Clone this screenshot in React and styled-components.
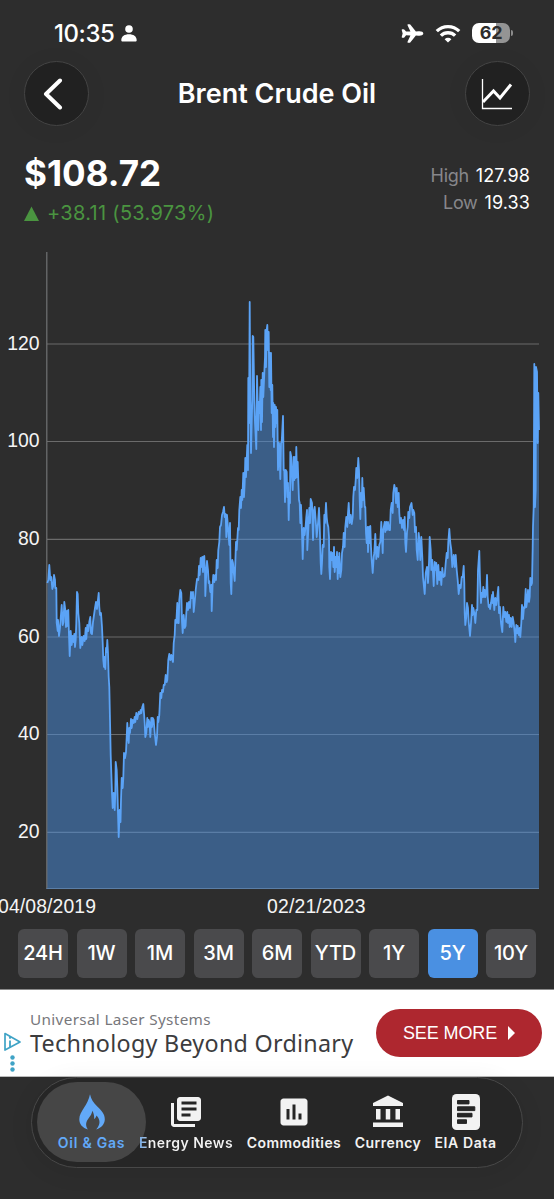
import React from "react";
import styled, { createGlobalStyle } from "styled-components";
import { IoAirplane } from "react-icons/io5";
import { MdLibraryBooks, MdAssessment, MdAccountBalance } from "react-icons/md";

const GlobalStyle = createGlobalStyle`
  * { box-sizing: border-box; }
  body { margin: 0; background: #2d2d2d; }
`;

const Screen = styled.div`
  width: 554px;
  height: 1199px;
  overflow: hidden;
  display: flex;
  flex-direction: column;
  background: #2d2d2d;
  color: #fff;
  font-family: Inter, "Liberation Sans", sans-serif;
  white-space: nowrap;
`;

const StatusBar = styled.div`
  height: 61px;
  padding: 5px 40px 0 54px;
  display: flex;
  align-items: center;
  justify-content: space-between;
`;

const StatusGroup = styled.div`
  display: flex;
  align-items: center;
  gap: ${(p) => p.$gap}px;
`;

const Clock = styled.span`
  font-size: 24px;
  font-weight: 500;
  letter-spacing: -0.45px;
`;

const Battery = styled.div`
  position: relative;
  width: 38px;
  height: 20px;
  border-radius: 7px;
  background: linear-gradient(90deg, #fff 62%, #949494 62%);
  color: #2d2d2d;
  font-size: 18px;
  line-height: 20px;
  font-weight: 700;
  text-align: center;
  letter-spacing: -0.3px;
  margin-right: 4px;
  &::after {
    content: "";
    position: absolute;
    left: 39px;
    top: 7px;
    width: 2px;
    height: 6px;
    border-radius: 0 2px 2px 0;
    background: #8b8b8b;
  }
`;

const Header = styled.header`
  height: 65px;
  padding: 0 24px;
  display: flex;
  align-items: center;
  justify-content: space-between;
`;

const RoundButton = styled.button`
  width: 65px;
  height: 65px;
  padding: 0;
  border: 1px solid #444;
  border-radius: 50%;
  background: #212121;
  box-shadow: 0 2px 24px rgba(0, 0, 0, 0.05);
  display: flex;
  align-items: center;
  justify-content: center;
`;

const Title = styled.h1`
  margin: 0;
  font-size: 27px;
  font-weight: 600;
  letter-spacing: 0;
`;

const Summary = styled.section`
  height: 114px;
  padding: 27px 24px 0;
  display: flex;
  justify-content: space-between;
`;

const Price = styled.div`
  font-size: 35px;
  line-height: 40px;
  font-weight: 700;
  letter-spacing: 0.05px;
`;

const Change = styled.div`
  margin-top: 8px;
  display: flex;
  align-items: center;
  gap: 8px;
  color: #4a9440;
  font-size: 20px;
  line-height: 24px;
  letter-spacing: 0.3px;
`;

const Range = styled.div`
  padding-top: 9px;
  display: flex;
  flex-direction: column;
  align-items: flex-end;
`;

const RangeRow = styled.div`
  height: 27px;
  line-height: 27px;
  display: flex;
  gap: 7px;
  font-size: 18px;
`;

const RangeName = styled.span`
  color: #87878b;
  font-weight: 400;
  letter-spacing: -0.3px;
`;

const RangeValue = styled.span`
  font-weight: 400;
  letter-spacing: 0.1px;
`;

const ChartSvg = styled.svg`
  display: block;
  flex: none;
`;

const AxisText = styled.text`
  font-family: "Liberation Sans", Arial, sans-serif;
  font-size: 19.4px;
  fill: #f4f4f4;
`;

const Periods = styled.div`
  height: 69px;
  padding: 9px 18px 0;
  display: flex;
  justify-content: space-between;
`;

const Period = styled.button`
  width: 50px;
  height: 49px;
  padding: 0 0 1px;
  border: 0;
  border-radius: 6px;
  background: ${(p) => (p.$active ? "#4a90e2" : "#4a4a4c")};
  color: #fff;
  font: 500 20px Inter, sans-serif;
  letter-spacing: -0.1px;
`;

const Ad = styled.section`
  height: 88px;
  border-top: 1px solid #8a8a8a;
  border-bottom: 1px solid #bbb;
  background: #fff;
  display: flex;
  align-items: center;
  padding: 0 12px 0 4px;
`;

const AdMarks = styled.svg`
  width: 18px;
  height: 42px;
  margin: 42px 8px 0 0;
  align-self: flex-start;
`;

const AdCopy = styled.div`
  flex: 1;
  padding-bottom: 2px;
  font-family: "Noto Sans", sans-serif;
`;

const Advertiser = styled.div`
  font-size: 15.3px;
  line-height: 22px;
  letter-spacing: 0.33px;
  color: #77777b;
`;

const Headline = styled.div`
  font-size: 23.3px;
  line-height: 27px;
  letter-spacing: 0.28px;
  color: #3c3c3e;
`;

const CallToAction = styled.button`
  width: 166px;
  height: 48px;
  border: 0;
  border-radius: 24px;
  background: #ae272f;
  color: #fff;
  font: 18px "Liberation Sans", Arial, sans-serif;
  letter-spacing: -0.1px;
  display: flex;
  align-items: center;
  justify-content: center;
  gap: 11px;
  padding: 0;
`;

const TabBar = styled.nav`
  margin: 0 31px;
  height: 91px;
  border: 1px solid #484848;
  border-radius: 46px;
  background: #262626;
  box-shadow: 0 4px 24px rgba(0, 0, 0, 0.08);
  display: flex;
  gap: 14px;
  padding: 15px 0 0 26px;
`;

const Tab = styled.div`
  position: relative;
  display: flex;
  flex-direction: column;
  align-items: center;
  color: ${(p) => (p.$active ? "#62a9f8" : "#f2f2f2")};
  width: ${(p) => p.$width}px;
`;

const ActivePill = styled.div`
  position: absolute;
  left: -21px;
  top: -11px;
  width: 109px;
  height: 80px;
  border-radius: 40px;
  background: #464646;
`;

const TabIcon = styled.div`
  position: relative;
  height: 38px;
  margin-bottom: 2px;
  display: flex;
  align-items: center;
`;

const TabLabel = styled.span`
  position: relative;
  font-size: 14px;
  line-height: 20px;
  font-weight: 600;
  letter-spacing: ${(p) => p.$spacing}px;
  ${(p) =>
    p.$tinted &&
    `
    color: transparent;
    background: linear-gradient(90deg, #74aceb, #a9c4e2 8px, #f2f2f2 9px);
    background-clip: text;
  `}
`;

const prices =
  "47.3,583 48.3,580 49.3,565 50.3,580 51.3,577 52.3,589 53.3,586 54,575 55,580 55.3,588 56.3,588 56.7,623 57.7,631 58,620 59,636 60,628 60.7,618 61.7,605 62.7,625 63.5,622 64.3,602 65.3,610 66,627 67,611 67.7,626 68.3,610 69,635 69.7,656 70.7,631 71.7,645 72.7,636 73.7,642 74.3,634 75,647 75.7,640 76.3,623 77,592 77.7,594 78.3,613 79.3,623 80.3,648 81.7,637 82.3,645 83.7,636 84.7,641 85.7,628 86.3,639 87.3,625 88.3,631 89.3,622 90.3,617 91,633 92,634 93,622 94,615 95,608 96,602 97,609 97.7,602 98.7,593 99.3,607 100,615 101,613 102,627 102.7,643 103.3,660 104,667 104.7,657 105.3,669 106,648 106.7,652 107.3,640 108,653 108.7,677 109.3,687 110,720 110.7,755 111.3,773 112,793 112.7,808 113.7,793 114.7,810 115.3,793 115.7,762 116.7,770 117.3,787 118,813 118.7,837 119.7,810 120.5,822 121,800 121.7,778 122.7,788 123.3,778 124,753 125,758 126,752 126.7,737 127.3,723 128,737 128.7,743 129.3,728 130,733 131,719 131.7,728 132.7,720 133.7,723 134.7,717 135.3,722 136.3,713 137.3,719 138.7,712 139.7,714 140.7,710 141.3,713 142.3,707 143.3,704 144,713 144.7,723 145.3,737 146.3,733 147.3,718 148,727 148.7,720 149.6,723 150.3,737 151.3,718 152,727 152.7,718 153.7,720 154.7,733 156,745 157,737 157.7,717 158.3,722 159.3,715 160.3,693 161.3,698 162,690 163,692 163.7,685 164.7,685 165.7,675 166.7,682 167.3,680 168.3,660 169.3,654 170.3,660 171.3,655 172.3,660 173,662 173.7,643 174.7,635 175.3,620 176.3,623 177.3,603 178,623 178.7,623 179.3,600 180.3,590 181.3,593 182,622 182.7,633 183.7,615 184.7,628 185.6,626 186.3,613 187,603 188,610 189,602 190,608 191,592 192,598 193,592 193.7,612 194.7,602 195.7,590 197,579 198.3,580 199,566 199.7,575 200.7,558 201.7,567 202.3,557 203,572 203.7,557 204.3,556 205,572 205.3,596 206.3,573 207,561 208,570 208.7,583 209.3,581 210.3,592 211.3,585 211.7,611 212.7,583 213.3,575 214.3,582 215.3,575 216,580 216.7,560 217.7,568 218.3,550 219.3,542 220,527 221,525 222,515 223,512 224,507 224.7,517 225.7,514 226.3,537 227,515 228,527 228.7,537 229.3,545 230,523 230.7,583 231.3,594 232.3,560 233,563 233.7,572 234.7,581 235.3,563 236,542 236.7,550 237.3,540 238,528 238.7,530 239.3,510 240.3,497 241,508 241.7,490 242.3,500 243.3,473 244,497 244.7,483 245.3,458 246,477 246.7,460 247.3,445 248,470 248.3,378 249,423 249.7,302 250.3,400 251,453 251.7,423 252.3,400 252.7,336 253.3,337 254.3,400 255,423 255.7,437 256.3,449 257,376 257.7,403 258.3,430 259,402 259.7,413 260.3,387 261,430 261.3,380 262,422 262.7,373 263.3,397 264.3,373 265,357 265.3,330 266,367 266.7,330 267.3,325 268,350 268.7,332 269.3,387 270,353 270.7,390 271,353 271.7,413 272.3,385 273,437 273.3,403 274,447 274.7,405 275.3,427 276,407 276.7,423 277.3,410 278,470 279,443 279.7,457 280.3,479 281,443 281.7,442 283,416 283.7,470 284.3,470 285,502 285.7,470 286.7,472 287.3,497 288,483 288.7,520 289.3,493 290,503 290.3,452 291.3,457 292,478 292.7,490 293.7,457 294.3,480 295,457 295.7,478 296.3,447 297,477 297.7,462 298.3,480 299,500 299.7,503 300.3,523 301,505 301.7,523 302.7,559 303.7,528 304.7,535 305.7,525 306.3,517 307,510 307.3,550 308.3,530 309.3,508 310,523 310.7,499 312,503 313,540 314,510 314.7,507 315.7,520 316.7,537 318,523 319,508 319.7,525 320.7,563 321.3,574 322,563 322.7,545 323.7,547 324.3,515 325,523 326,503 326.7,517 327.3,523 328.3,527 329,537 329.3,567 330,579 331,552 331.7,560 332.7,553 333.3,567 334,547 334.7,572 335.7,557 336.3,567 337,552 337.7,579 338.3,557 339,573 339.3,553 340.3,577 341.3,570 342,553 343,547 343.7,533 344.7,547 345.3,527 346.3,517 347.3,527 348,513 348.7,503 349.7,523 350.7,515 351.7,524 352.7,517 353.3,497 354,487 355,490 355.7,480 356.3,468 357.3,478 358.3,458 359,470 359.7,500 360.3,519 361,493 361.7,507 362.3,478 363,500 363.7,488 364.7,507 365.3,507 366,533 366.7,543 367.7,527 368,552 369,527 369.7,543 370.3,526 371,547 371.7,560 372.7,573 373.7,557 374.3,553 375.3,534 376.3,559 377.3,547 378.3,557 379.3,545 380.3,542 381.3,522 382,537 382.7,553 383.3,530 384.7,522 385.3,532 386.3,522 387,530 388,522 389,530 390,530 390.7,510 391.7,503 392.7,513 393.3,493 394.3,485 395.3,490 396,503 396.7,488 397.7,507 398.7,493 399.3,513 400,523 401,518 402,528 403,520 404,530 404.7,517 405.3,543 406,552 407,532 407.7,527 408.3,512 409.3,518 410,507 411.5,503 412.7,515 413.3,510 414.3,513 415,532 416,527 416.7,550 417.7,560 418.7,533 419.7,543 420.3,560 421.3,537 422.3,557 423,577 424.7,594 425.7,573 427,567 428,583 429,563 429.7,537 430.7,550 431.3,570 432.3,560 433.7,586 434.7,562 435.7,570 436.3,563 437.3,584 438.3,565 439.3,580 440.3,572 441.3,585 442.3,568 443.3,577 444.7,576 445.7,563 446.7,553 447.7,558 448.3,542 449.3,529 450.3,543 451.3,550 452.3,567 453.7,555 454.7,567 455.7,555 456.7,570 457.7,580 458.7,594 459.7,585 460.7,588 461.7,577 462.7,577 463.7,566 464.3,583 464.7,613 465.3,625 466.3,617 467,603 468,608 468.7,622 469.3,628 470,636 471,623 472,605 472.7,615 473.3,608 474.3,613 475.3,623 476.3,610 477.3,610 478,570 479.3,551 480,580 481,603 481.7,593 482.5,597 483.3,587 484,597 484.7,590 485.3,597 486.3,593 487,575 487.7,597 488.7,607 489.7,605 490,609 491,603 492,595 492.6,603 493,592 494.3,610 495.3,598 496.3,605 497.3,597 498.3,587 499,613 500,607 501,623 502.3,632 503.3,607 504.3,617 505.3,612 506.3,622 507.3,612 508,623 509,615 509.7,627 510.7,618 511.7,627 512.7,617 513.7,623 514.7,633 515.3,642 516.3,625 517,633 517.7,626 518.7,635 519.7,628 520.3,637 521.3,623 522,605 523,619 524,607 524.7,608 525.7,589 526.3,607 527.3,600 528,590 529,602 529.7,597 530.3,578 531.3,585 532,583 532.7,547 533,527 533.7,507 534.3,364 535,507 535.7,490 536,367 537,372 537.7,443 538.3,393 539,430";

const gridLines = [
  { value: 120, y: 344 },
  { value: 100, y: 441.5 },
  { value: 80, y: 539.3 },
  { value: 60, y: 637 },
  { value: 40, y: 734.5 },
  { value: 20, y: 832.3 },
];

function PriceChart() {
  return (
    <ChartSvg width="554" height="680" viewBox="0 240 554 680">
      {gridLines.map((g) => (
        <g key={g.value}>
          <line x1="47" x2="539" y1={g.y} y2={g.y} stroke="#6b6b6b" strokeWidth="1.2" />
          <AxisText x="39.5" y={g.y + 5.6} textAnchor="end">{g.value}</AxisText>
        </g>
      ))}
      <polygon points={`47,888.5 ${prices} 539,888.5`} fill="#4a90e2" fillOpacity="0.5" />
      <line x1="46.8" x2="46.8" y1="252" y2="889" stroke="#707274" strokeWidth="1.2" />
      <line x1="46.5" x2="539" y1="888.5" y2="888.5" stroke="#5b7ea6" strokeWidth="1" />
      <polyline points={prices} fill="none" stroke="#5ba3f6" strokeWidth="1.8" strokeLinejoin="round" />
      <AxisText x="-2" y="913" textLength="98">04/08/2019</AxisText>
      <AxisText x="267" y="913" textLength="98.5">02/21/2023</AxisText>
    </ChartSvg>
  );
}

const PersonIcon = () => (
  <svg width="16" height="17" viewBox="0 0 16 17" fill="#fff">
    <circle cx="8" cy="4" r="3.8" />
    <path d="M0.3 15.2C0.3 11.4 3.6 9.3 8 9.3s7.7 2.1 7.7 5.9c0 .9-.5 1.3-1.4 1.3H1.7c-.9 0-1.4-.4-1.4-1.3Z" />
  </svg>
);

const WifiIcon = () => (
  <svg width="26" height="19" viewBox="0 0 26 19" fill="none" stroke="#fff" strokeWidth="3.3">
    <path d="M1.8 7.2a15.8 15.8 0 0 1 22.4 0" />
    <path d="M5.9 11.7a10 10 0 0 1 14.2 0" />
    <path d="M13 18.6l-3.4-3.4a4.9 4.9 0 0 1 6.8 0Z" fill="#fff" stroke="none" />
  </svg>
);

const FlameIcon = () => (
  <svg width="26" height="36" viewBox="0 0 26 36" fill="currentColor">
    <path d="M11 .3C12 5.5 14.6 9 18.3 12.6 22.6 16.8 25.8 20 25.8 25.2c0 4.6-3.2 8.6-8.6 10.2 2.6-3 3.6-5.4 3.2-8.3-.3-2.2-1.4-3.9-2.9-5.6-.4 1.6-1.1 2.8-2.3 3.6.1-3.3-.4-5.7-1.8-8.3-.6 3.1-1.8 4.9-3.6 7.2-3 3.8-3.7 7.6-.9 11.4C3.6 34 .3 30 .3 25.2c0-4.2 2.1-7.4 4.7-11.4C7.7 9.6 9.9 5.8 11 .3Z" />
  </svg>
);

const ReportIcon = () => (
  <svg width="28" height="36" viewBox="0 0 28 36">
    <rect width="28" height="36" rx="4.5" fill="currentColor" />
    <path d="M5.5 6.5h11.5v3.4H5.5zM5.5 12.8h17.3v3.8H5.5zM5.5 19.3h14.5v3.6H5.5zM5.5 25.8h9v3.6h-9z" fill="#262626" stroke="#262626" strokeLinejoin="round" />
  </svg>
);

const tabs = [
  { label: "Oil & Gas", icon: <FlameIcon />, width: 67, spacing: 0.75, active: true },
  { label: "Energy News", icon: <MdLibraryBooks size={36} />, width: 94, spacing: 0.45, tinted: true },
  { label: "Commodities", icon: <MdAssessment size={36} />, width: 94, spacing: 0.45 },
  { label: "Currency", icon: <MdAccountBalance size={36} />, width: 66, spacing: 0.45 },
  { label: "EIA Data", icon: <ReportIcon />, width: 61, spacing: 0.6 },
];

const periods = ["24H", "1W", "1M", "3M", "6M", "YTD", "1Y", "5Y", "10Y"];

export default function App() {
  return (
    <>
      <GlobalStyle />
      <Screen>
        <StatusBar>
          <StatusGroup $gap={7}>
            <Clock>10:35</Clock>
            <PersonIcon />
          </StatusGroup>
          <StatusGroup $gap={11}>
            <IoAirplane size={23} />
            <WifiIcon />
            <Battery>62</Battery>
          </StatusGroup>
        </StatusBar>
        <Header>
          <RoundButton aria-label="Back">
            <svg width="20" height="32" viewBox="0 0 20 32" fill="none" stroke="#fff" strokeWidth="4" strokeLinecap="round" strokeLinejoin="round" transform="translate(-4 0)">
              <path d="M17 2.5 3 16l14 13.5" />
            </svg>
          </RoundButton>
          <Title>Brent Crude Oil</Title>
          <RoundButton aria-label="Chart type">
            <svg width="32" height="32" viewBox="0 0 32 32" fill="none" stroke="#fff">
              <path d="M1.5 1v29.5H31" strokeWidth="1.3" />
              <path d="m2 24 10.5-11 6.5 7L30 6.5" strokeWidth="3" />
            </svg>
          </RoundButton>
        </Header>
        <Summary>
          <div>
            <Price>$108.72</Price>
            <Change>
              <svg width="15" height="15" viewBox="0 0 15 15">
                <path d="M7.5 0.5 15 15H0Z" fill="#4a9440" />
              </svg>
              +38.11 (53.973%)
            </Change>
          </div>
          <Range>
            <RangeRow>
              <RangeName>High</RangeName>
              <RangeValue>127.98</RangeValue>
            </RangeRow>
            <RangeRow>
              <RangeName>Low</RangeName>
              <RangeValue>19.33</RangeValue>
            </RangeRow>
          </Range>
        </Summary>
        <PriceChart />
        <Periods>
          {periods.map((p) => (
            <Period key={p} $active={p === "5Y"}>{p}</Period>
          ))}
        </Periods>
        <Ad>
          <AdMarks viewBox="0 0 18 42" fill="none" stroke="#3fa3c6">
            <path d="M1 1.5 16 10 1 18Z" strokeWidth="1.7" strokeLinejoin="round" />
            <path d="M6 8.5v7" strokeWidth="1.8" />
            <circle cx="6" cy="5.8" r="1.1" fill="#3fa3c6" stroke="none" />
            <g fill="#3fa3c6" stroke="none">
              <circle cx="8.5" cy="25.5" r="2.2" />
              <circle cx="8.5" cy="31.5" r="2.2" />
              <circle cx="8.5" cy="37.5" r="2.2" />
            </g>
          </AdMarks>
          <AdCopy>
            <Advertiser>Universal Laser Systems</Advertiser>
            <Headline>Technology Beyond Ordinary</Headline>
          </AdCopy>
          <CallToAction>
            SEE MORE
            <svg width="7" height="14" viewBox="0 0 7 14">
              <path d="M0 0 7 7 0 14Z" fill="#fff" />
            </svg>
          </CallToAction>
        </Ad>
        <TabBar>
          {tabs.map((t) => (
            <Tab key={t.label} $active={t.active} $width={t.width}>
              {t.active && <ActivePill />}
              <TabIcon>{t.icon}</TabIcon>
              <TabLabel $spacing={t.spacing} $tinted={t.tinted}>{t.label}</TabLabel>
            </Tab>
          ))}
        </TabBar>
      </Screen>
    </>
  );
}
